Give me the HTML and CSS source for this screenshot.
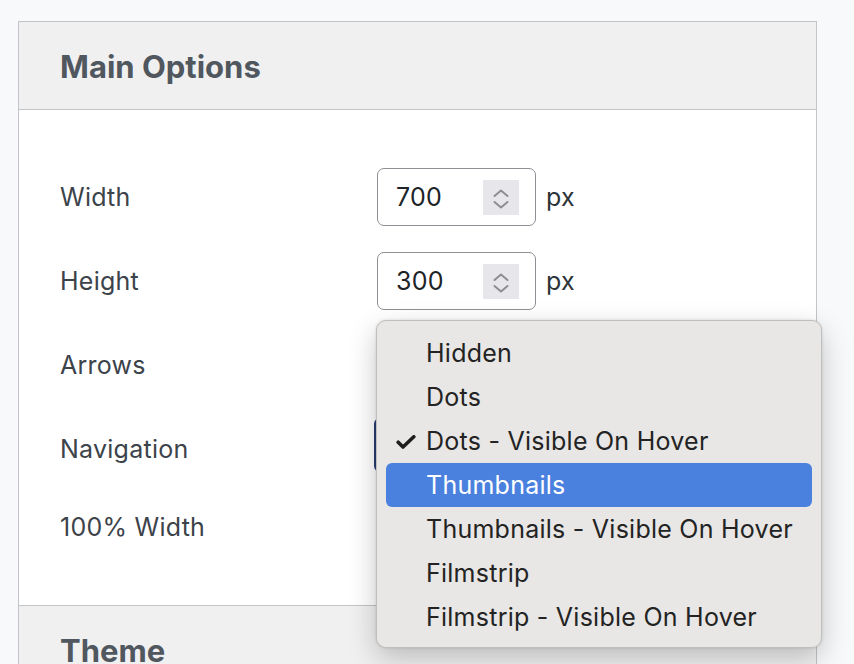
FILE: index.html
```html
<!DOCTYPE html>
<html lang="en">
<head>
<meta charset="utf-8">
<title>Main Options</title>
<link rel="stylesheet" href="styles.css">
</head>
<body>
<div class="page">
  <section class="card">
    <header class="card-head"><h2>Main Options</h2></header>
    <div class="card-body">
      <div class="row">
        <label class="label">Width</label>
        <div class="control">
          <div class="num"><span class="num-val">700</span>
            <span class="spin"><svg width="36" height="35" viewBox="0 0 36 35"><path d="M11.5 16 L18 10.5 L24.5 16" fill="none" stroke="#8d8d92" stroke-width="2" stroke-linecap="round" stroke-linejoin="round"/><path d="M11.5 22 L18 27.5 L24.5 22" fill="none" stroke="#8d8d92" stroke-width="2" stroke-linecap="round" stroke-linejoin="round"/></svg></span>
          </div>
          <span class="unit">px</span>
        </div>
      </div>
      <div class="row">
        <label class="label">Height</label>
        <div class="control">
          <div class="num"><span class="num-val">300</span>
            <span class="spin"><svg width="36" height="35" viewBox="0 0 36 35"><path d="M11.5 16 L18 10.5 L24.5 16" fill="none" stroke="#8d8d92" stroke-width="2" stroke-linecap="round" stroke-linejoin="round"/><path d="M11.5 22 L18 27.5 L24.5 22" fill="none" stroke="#8d8d92" stroke-width="2" stroke-linecap="round" stroke-linejoin="round"/></svg></span>
          </div>
          <span class="unit">px</span>
        </div>
      </div>
      <div class="row">
        <label class="label">Arrows</label>
        <div class="control"><div class="select"></div></div>
      </div>
      <div class="row">
        <label class="label">Navigation</label>
        <div class="control"><div class="select select-focus"></div></div>
      </div>
      <div class="row row-last">
        <label class="label">100% Width</label>
        <div class="control"><span class="checkbox"></span></div>
      </div>
    </div>
    <header class="card-head card-head-2"><h2>Theme</h2></header>
  </section>

  <ul class="menu">
    <li class="item">Hidden</li>
    <li class="item">Dots</li>
    <li class="item checked"><span class="check"><svg width="20" height="14" viewBox="0 0 20 14"><path d="M2.2 7.2 L7 12 L17.8 1.8" fill="none" stroke="#1e1e1e" stroke-width="3.6" stroke-linecap="round" stroke-linejoin="round"/></svg></span>Dots - Visible On Hover</li>
    <li class="item active">Thumbnails</li>
    <li class="item">Thumbnails - Visible On Hover</li>
    <li class="item">Filmstrip</li>
    <li class="item">Filmstrip - Visible On Hover</li>
  </ul>
</div>
</body>
</html>
```

FILE: styles.css
```css
* { box-sizing: border-box; }
html, body { margin: 0; padding: 0; }
body {
  background: #f8f9fa;
  font-family: Inter, "Noto Sans", "Liberation Sans", sans-serif;
  color: #3c434a;
  width: 854px;
  height: 664px;
  overflow: hidden;
}
.page {
  position: relative;
  padding: 21px 0 0 18px;
}
.card {
  width: 799px;
  background: #fff;
  border: 1px solid #c3c4c7;
}
.card-head {
  height: 88px;
  background: #f0f0f1;
  border-bottom: 1px solid #c3c4c7;
  display: flex;
  align-items: center;
  padding-left: 41px;
}
.card-head h2 {
  margin: 0;
  font-size: 31px;
  font-weight: 700;
  color: #50575e;
  padding-top: 2px;
}
.card-head-2 {
  border-top: 1px solid #c3c4c7;
  border-bottom: none;
}
.card-body {
  padding: 45px 0 42px 41px;
}
.row {
  height: 84px;
  display: flex;
  align-items: center;
}
.row-last { height: 72px; }
.label {
  width: 317px;
  font-size: 25px;
  letter-spacing: 0.25px;
  color: #3c434a;
}
.control {
  display: flex;
  align-items: center;
  gap: 10px;
}
.num {
  width: 159px;
  height: 58px;
  border: 1.5px solid #8c8f94;
  border-radius: 7px;
  display: flex;
  align-items: center;
  justify-content: space-between;
  padding: 0 16px 0 18px;
  background: #fff;
}
.num-val {
  font-size: 25px;
  letter-spacing: 0.25px;
  color: #1d2327;
}
.spin {
  display: block;
  width: 36px;
  height: 35px;
  background: #e7e7eb;
}
.spin svg { display: block; }
.unit {
  font-size: 25px;
  letter-spacing: 0.25px;
  color: #2c3338;
}
.select {
  width: 300px;
  height: 54px;
  border: 1.5px solid #8c8f94;
  border-radius: 6px;
}
.select-focus {
  border: 2px solid #2a3f73;
  margin-left: -3px;
  margin-top: -8px;
}
.checkbox {
  width: 24px;
  height: 24px;
  border: 1.5px solid #8c8f94;
  border-radius: 4px;
}
.menu {
  position: absolute;
  left: 376px;
  top: 320px;
  width: 446px;
  height: 328px;
  margin: 0;
  padding: 10px 9px 0 9px;
  list-style: none;
  background: #e8e7e5;
  border: 1px solid #bfbfbf;
  border-radius: 10px;
  box-shadow: 0 10px 28px rgba(0,0,0,0.22), 0 0 3px rgba(0,0,0,0.12);
}
.item {
  position: relative;
  height: 44px;
  display: flex;
  align-items: center;
  padding-left: 40px;
  font-size: 25px;
  letter-spacing: 0.25px;
  color: #232323;
  border-radius: 6px;
}
.item.active {
  background: #4a80de;
  color: #fff;
}
.check {
  position: absolute;
  left: 10px;
  top: 16px;
  display: block;
  width: 20px;
  height: 14px;
}
.check svg { display: block; }
```
